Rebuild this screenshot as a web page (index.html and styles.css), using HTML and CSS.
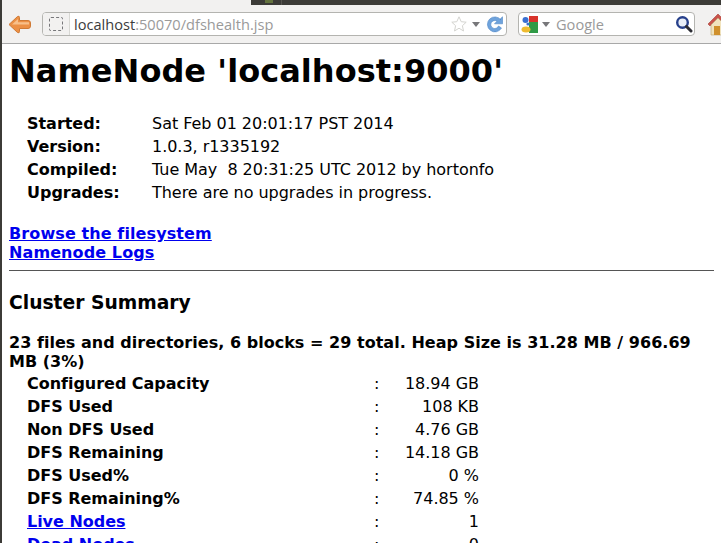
FILE: index.html
```html
<!DOCTYPE html>
<html lang="en">
<head>
<meta charset="utf-8">
<title>Hadoop NameNode localhost:9000</title>
<link rel="stylesheet" href="styles.css">
</head>
<body>
<header class="chrome">
  <div class="tabstrip">
    <span class="tabstrip-light"></span>
    <span class="tabstrip-dark"><span class="tab-green"></span><span class="tab-divider"></span></span>
  </div>
  <div class="toolbar">
    <svg class="back" width="23" height="19" viewBox="0 0 23 19"><path d="M1 9.500 L9.500 1.500 Q11.500 .5 11.500 2.500 L11.500 5.500 H20 Q22.500 5.500 22.500 8 V11 Q22.500 13.500 20 13.500 H11.500 V16.500 Q11.500 18.500 9.500 17.500 Z" fill="#ec9045" stroke="#cf7a35" stroke-width="1"/><path d="M4 9.500 L10 4 V7.200 H21 V9.500 Z" fill="#f8c08a"/></svg>
    <div class="urlbar">
      <span class="favbox"><span class="favicon"></span></span>
      <span class="url"><span class="host">localhost</span>:50070/dfshealth.jsp</span>
      <svg class="star" width="16" height="16" viewBox="0 0 16 16"><path d="M8 .8 L10.200 5.700 L15.200 6.200 L11.400 9.700 L12.500 15 L8 12.200 L3.500 15 L4.600 9.700 L.8 6.200 L5.800 5.700 Z" fill="#fff" stroke="#d4d4d0"/></svg>
      <span class="caret"></span>
      <svg class="reload" width="17" height="17" viewBox="0 0 17 17"><path d="M15 4 A7.500 7.500 0 1 0 15.500 12 L12.500 10 A4 4 0 1 1 11 5.200 L8.500 7.800 H16.500 V.8 L14 3.200 Z" fill="#6fa3dc" stroke="#4f86c6" stroke-width=".6"/></svg>
    </div>
    <div class="searchbar">
      <svg class="glogo" width="17" height="17" viewBox="0 0 17 17"><rect width="17" height="17" rx="2" fill="#fff"/><rect x="8" y="0" width="9" height="7" fill="#d8332b"/><rect x="8" y="6" width="9" height="11" fill="#2f9a46"/><circle cx="4.500" cy="4" r="3" fill="#3a6fd0"/><circle cx="7" cy="8" r="1.600" fill="#3a6fd0"/><ellipse cx="5" cy="13.500" rx="4.500" ry="3" fill="#eebb30"/></svg>
      <span class="caret"></span>
      <span class="search-label">Google</span>
      <svg class="lens" width="18" height="18" viewBox="0 0 18 18"><circle cx="7.500" cy="7.500" r="5.300" fill="#e8eef8" stroke="#27408b" stroke-width="2.400"/><path d="M11.500 11.500 L16 16" stroke="#2b2b33" stroke-width="3" stroke-linecap="round"/></svg>
    </div>
    <svg class="home" width="22" height="23" viewBox="0 0 22 23"><path d="M1 11 L11 1 L21 11 L19 13 L11 5 L3 13 Z" fill="#c8534a" stroke="#a63c34" stroke-width=".6"/><path d="M4 12 L11 5 L18 12 V22 H4 Z" fill="#f1e3bd" stroke="#b8a271" stroke-width=".6"/><rect x="7" y="13" width="6" height="9" fill="#d0902c"/></svg>
  </div>
</header>
<main class="page">
  <h1>NameNode 'localhost:9000'</h1>
  <table class="info">
    <tr><th>Started:</th><td>Sat Feb 01 20:01:17 PST 2014</td></tr>
    <tr><th>Version:</th><td>1.0.3, r1335192</td></tr>
    <tr><th>Compiled:</th><td>Tue May &nbsp;8 20:31:25 UTC 2012 by hortonfo</td></tr>
    <tr><th>Upgrades:</th><td>There are no upgrades in progress.</td></tr>
  </table>
  <p class="links"><a href="#">Browse the filesystem</a><br><a href="#">Namenode Logs</a></p>
  <hr>
  <h2>Cluster Summary</h2>
  <p class="summary">23 files and directories, 6 blocks = 29 total. Heap Size is 31.28 MB / 966.69 MB (3%)</p>
  <table class="stats">
    <tr><th>Configured Capacity</th><td class="sep">:</td><td class="val">18.94 GB</td></tr>
    <tr><th>DFS Used</th><td class="sep">:</td><td class="val">108 KB</td></tr>
    <tr><th>Non DFS Used</th><td class="sep">:</td><td class="val">4.76 GB</td></tr>
    <tr><th>DFS Remaining</th><td class="sep">:</td><td class="val">14.18 GB</td></tr>
    <tr><th>DFS Used%</th><td class="sep">:</td><td class="val">0 %</td></tr>
    <tr><th>DFS Remaining%</th><td class="sep">:</td><td class="val">74.85 %</td></tr>
    <tr><th><a href="#">Live Nodes</a></th><td class="sep">:</td><td class="val">1</td></tr>
    <tr><th><a href="#">Dead Nodes</a></th><td class="sep">:</td><td class="val">0</td></tr>
  </table>
</main>
</body>
</html>
```
FILE: styles.css
```css
html, body {
  margin: 0;
  height: 100%;
}
body {
  width: 721px;
  height: 543px;
  overflow: hidden;
  background: #fff;
  color: #000;
  font-family: "DejaVu Sans", sans-serif;
  font-size: 16px;
  line-height: 19px;
  border-left: 2px solid #3c3b37;
  box-sizing: border-box;
}
.chrome {
  height: 43px;
  background: #f2f1f0;
  border-bottom: 1px solid #a8a8a8;
}
.tabstrip {
  height: 5px;
  display: flex;
}
.tabstrip-light {
  width: 249px;
  background: #f2f1f0;
}
.tabstrip-dark {
  flex: 1;
  display: flex;
  background: #3c3b37;
}
.tab-green {
  width: 8px;
  height: 3px;
  margin-left: 14px;
  background: #64733f;
}
.tab-divider {
  width: 1px;
  margin-left: 8px;
  background: #55544f;
}
.toolbar {
  display: flex;
  align-items: center;
  height: 26px;
  margin-top: 6px;
  padding-left: 6px;
}
.back {
  margin-right: 11px;
  flex: none;
}
.urlbar {
  display: flex;
  align-items: center;
  flex: none;
  width: 465px;
  height: 24px;
  box-sizing: border-box;
  border: 1px solid #b4b4b0;
  border-radius: 4px;
  background: #fff;
}
.favbox {
  display: flex;
  align-items: center;
  justify-content: center;
  flex: none;
  width: 26px;
  height: 22px;
  background: #f2f1f0;
  border-right: 1px solid #d8d8d4;
  border-radius: 3px 0 0 3px;
}
.favicon {
  width: 12px;
  height: 12px;
  border: 1px dashed #77777a;
  border-radius: 2px;
}
.url {
  flex: 1;
  margin-left: 4px;
  font-family: "Open Sans", sans-serif;
  font-size: 14.6px;
  color: #9a9a9a;
}
.host {
  color: #3c3c3c;
}
.star {
  margin-right: 5px;
}
.caret {
  flex: none;
  width: 0;
  height: 0;
  border-left: 4px solid transparent;
  border-right: 4px solid transparent;
  border-top: 5px solid #77777a;
}
.reload {
  margin: 0 3px 0 6px;
}
.searchbar {
  display: flex;
  align-items: center;
  flex: none;
  width: 177px;
  height: 24px;
  box-sizing: border-box;
  margin-left: 11px;
  padding: 0 1px 0 2px;
  border: 1px solid #b4b4b0;
  border-radius: 4px;
  background: #fff;
}
.searchbar .caret {
  margin-left: 4px;
}
.search-label {
  flex: 1;
  margin-left: 6px;
  font-family: "Open Sans", sans-serif;
  font-size: 14.6px;
  color: #9a9a9a;
}
.home {
  margin-left: 12px;
  flex: none;
}
.page {
  padding: 0 7px 0 7px;
}
h1 {
  margin: 8px 0 0;
  font-size: 32px;
  line-height: 38px;
  font-weight: bold;
  letter-spacing: 0.04px;
}
table {
  border-spacing: 2px;
  letter-spacing: -0.03px;
}
th {
  text-align: left;
  font-weight: bold;
  padding: 1px;
}
td {
  padding: 1px;
}
.info {
  margin: 21px 0 0 15px;
}
.info th {
  width: 121px;
}
.links {
  margin: 19px 0 0;
  font-weight: bold;
  letter-spacing: 0.1px;
}
a {
  color: #0000ee;
}
hr {
  margin: 8px 0 0;
  height: 0;
  border: 0;
  border-top: 1px solid #555;
}
h2 {
  margin: 20px 0 0;
  font-size: 18.72px;
  line-height: 23px;
}
.summary {
  margin: 19px 0 0;
  font-weight: bold;
  letter-spacing: 0.03px;
}
.stats {
  margin: 0 0 0 15px;
  table-layout: fixed;
  width: 458px;
}
.stats th {
  width: 343px;
}
.sep {
  width: 24px;
}
.val {
  text-align: right;
  white-space: nowrap;
}
```
